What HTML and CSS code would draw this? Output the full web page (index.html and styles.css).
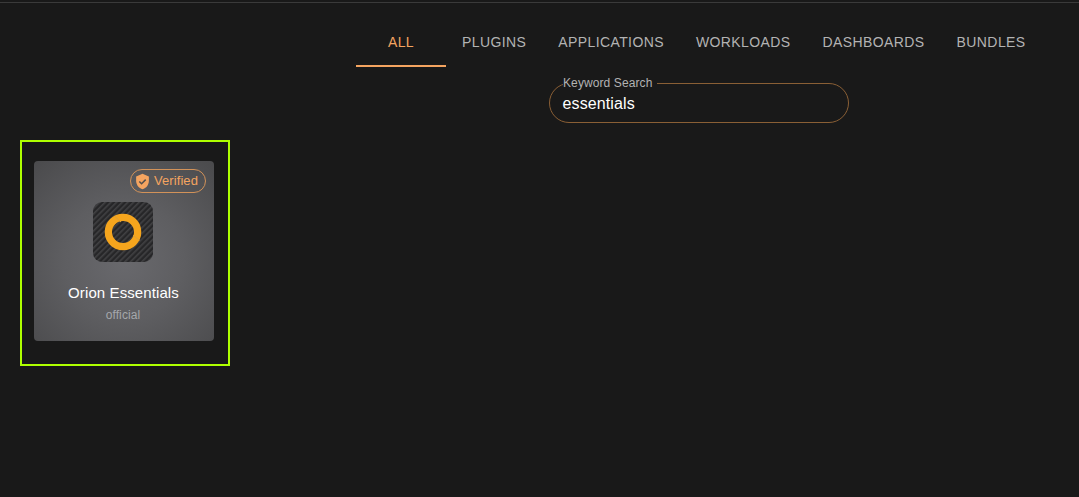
FILE: index.html
```html
<!DOCTYPE html>
<html lang="en">
<head>
<meta charset="utf-8">
<title>Catalog</title>
<link rel="stylesheet" href="styles.css">
</head>
<body>
<div class="topline"></div>
<main class="page">
  <nav class="tabs">
    <a class="tab active">All</a>
    <a class="tab">Plugins</a>
    <a class="tab">Applications</a>
    <a class="tab">Workloads</a>
    <a class="tab">Dashboards</a>
    <a class="tab">Bundles</a>
  </nav>
  <div class="search-row">
    <fieldset class="search">
      <legend class="search-legend">Keyword Search</legend>
      <span class="search-value">essentials</span>
    </fieldset>
  </div>
  <section class="grid">
    <div class="selected">
      <article class="card">
        <div class="badge-row">
          <span class="badge">
            <svg class="shield" viewBox="0 0 24 24" width="17" height="17" aria-hidden="true"><path fill="#f4a460" d="M12 1 3 5v6c0 5.55 3.84 10.74 9 12 5.16-1.26 9-6.45 9-12V5l-9-4z"/><path fill="none" stroke="#55504c" stroke-width="2.2" d="m7.5 12 3.2 3.2 5.8-5.8"/></svg>
            <span class="badge-text">Verified</span>
          </span>
        </div>
        <div class="logo">
          <svg viewBox="0 0 60 60" width="60" height="60" aria-hidden="true">
            <defs>
              <pattern id="hatch" width="4" height="4" patternUnits="userSpaceOnUse" patternTransform="rotate(-45)">
                <rect width="4" height="4" fill="#262628"/>
                <rect width="4" height="1.6" fill="#414143"/>
              </pattern>
            </defs>
            <rect width="60" height="60" rx="9" fill="url(#hatch)"/>
            <circle cx="30" cy="30" r="14.65" fill="none" stroke="#f5a51d" stroke-width="7.3"/>
            <path d="M21.7 14.3 28 20M40 33.3 46.7 38.3" fill="none" stroke="#d9a03c" stroke-width="1"/>
          </svg>
        </div>
        <h3 class="name">Orion Essentials</h3>
        <p class="kind">official</p>
      </article>
    </div>
  </section>
</main>
</body>
</html>
```
FILE: styles.css
```css
* { box-sizing: border-box; }
html, body { margin: 0; height: 100%; }
body {
  background: #191919;
  font-family: "Liberation Sans", Arial, sans-serif;
  overflow: hidden;
}
.topline { height: 3px; border-bottom: 1px solid #3a3a3a; }
.page { display: flex; flex-direction: column; }
.tabs { display: flex; padding: 15px 0 0 356px; height: 64px; }
.tab {
  height: 49px;
  min-width: 90px;
  padding: 16px 16px 0;
  text-align: center;
  font-size: 14px;
  line-height: 16px;
  letter-spacing: 0.4px;
  text-transform: uppercase;
  color: #b3b3b3;
}
.tab.active { color: #f4a460; border-bottom: 2px solid #f4a460; }
.search-row { display: flex; padding: 14px 0 0 549px; }
.search {
  width: 300px;
  height: 47px;
  margin: -5px 0 0;
  padding: 0 12.5px;
  border: 1px solid #8a5f35;
  border-radius: 20px;
}
.search-legend {
  padding: 0 5px 0 0.5px;
  margin-left: 0;
  font-size: 12px;
  line-height: 14px;
  letter-spacing: 0.1px;
  color: #b3b3b3;
}
.search-value { display: block; font-size: 16px; line-height: 18px; margin-top: 5px; letter-spacing: 0.12px; color: #fff; }
.grid { display: flex; padding: 17px 0 0 20px; }
.selected {
  width: 210px;
  height: 226px;
  padding: 19px 12px;
  border: 2px solid #aeff00;
}
.card {
  width: 180px;
  height: 180px;
  padding: 8px 8px 0 6px;
  display: flex;
  flex-direction: column;
  align-items: center;
  border-radius: 4px;
  background: radial-gradient(circle at 50% 55%, #69696d 0%, #5e5e61 45%, #4a4a4c 100%);
}
.badge-row { align-self: flex-end; display: flex; height: 24px; }
.badge {
  display: inline-flex;
  align-items: center;
  gap: 3px;
  height: 24px;
  padding: 0 7px 0 3px;
  border: 1px solid #d29259;
  border-radius: 12px;
  font-size: 13px;
  color: #f4a460;
}
.badge-text { margin-top: -2px; letter-spacing: 0.08px; }
.shield { display: block; }
.logo { margin-top: 9px; height: 60px; }
.logo svg { display: block; }
.name { margin: 22px 0 0 1px; font-size: 15px; line-height: 18px; letter-spacing: 0.1px; font-weight: 400; color: #fff; }
.kind { margin: 6px 0 0; font-size: 12px; line-height: 14px; letter-spacing: 0.1px; color: #a5a7ab; }
```
